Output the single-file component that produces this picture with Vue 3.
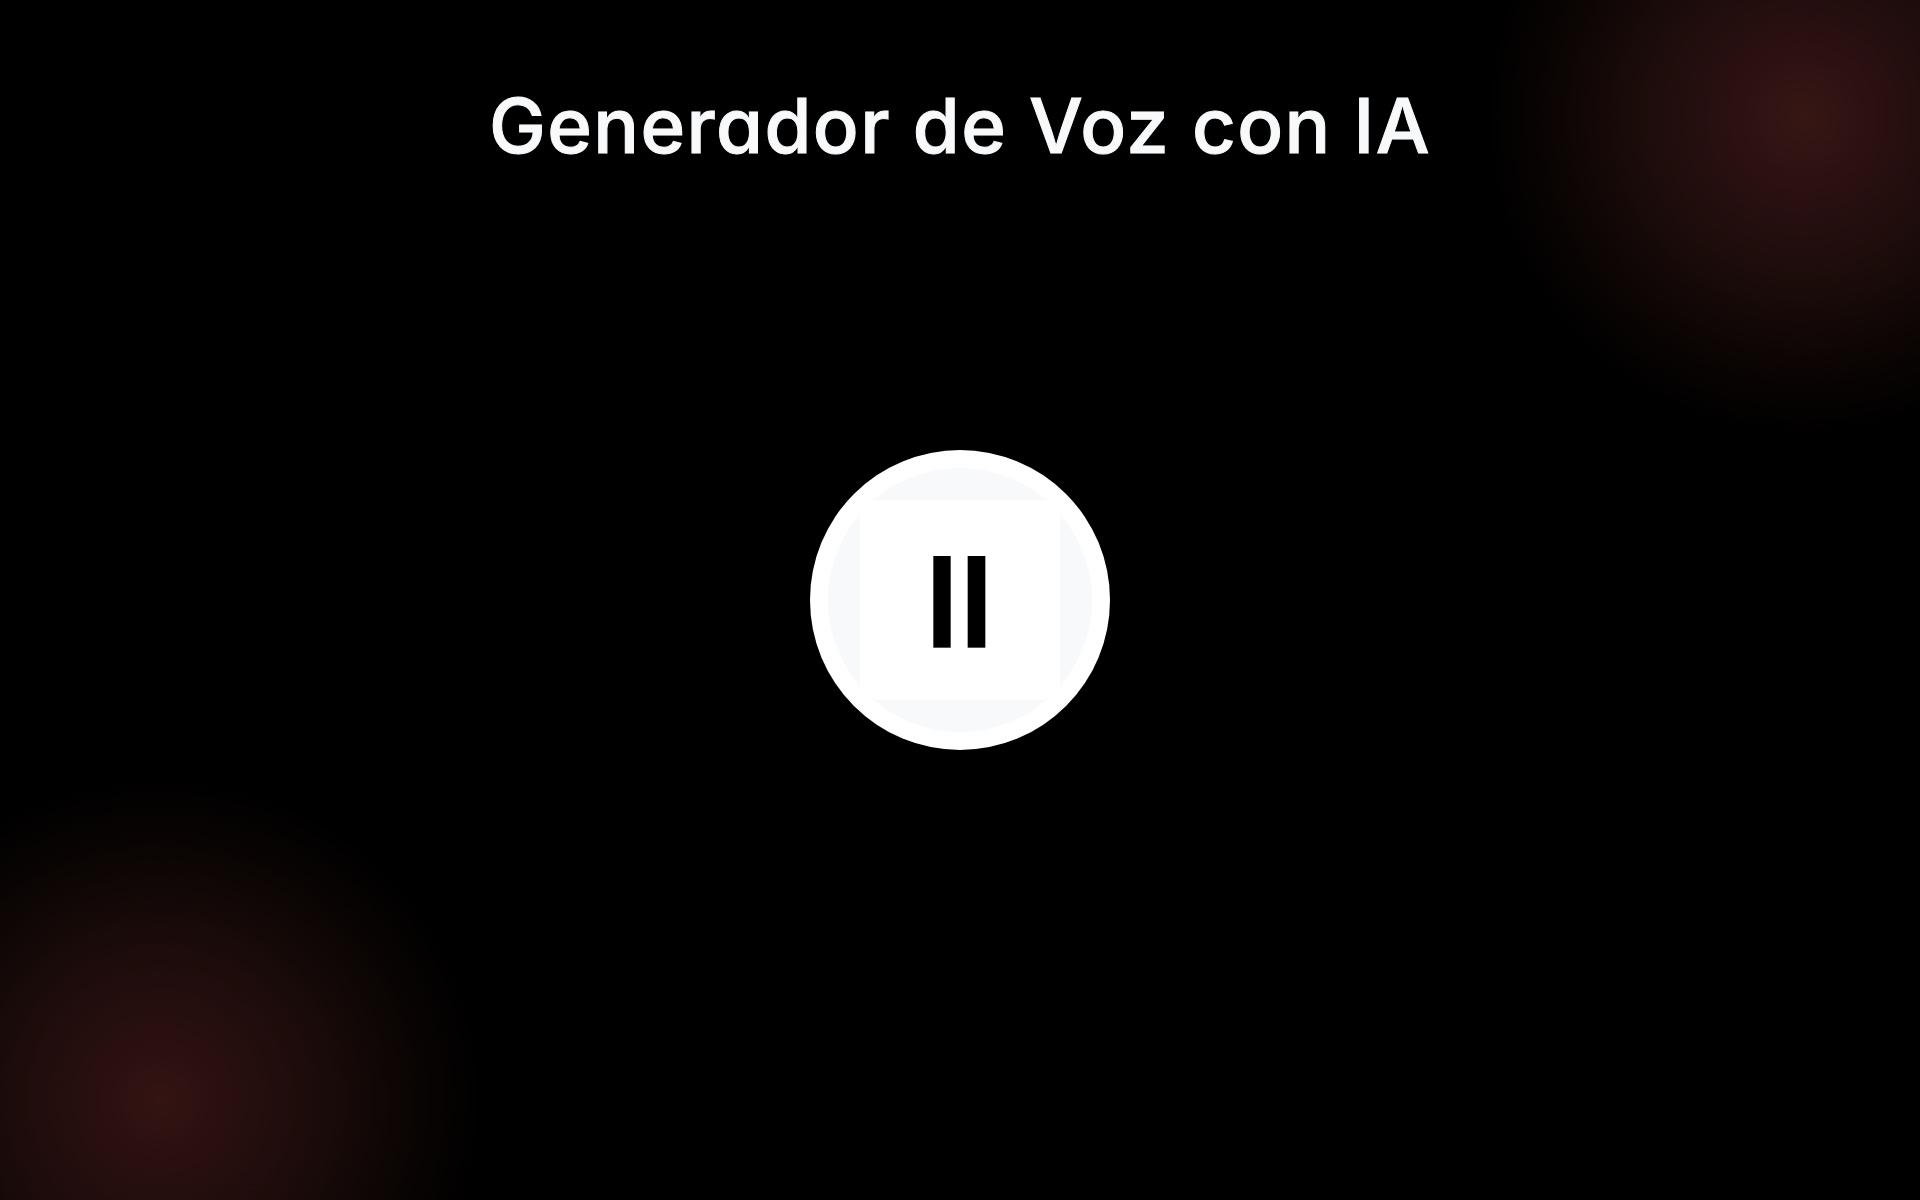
<script setup>
const title = 'Generador de Voz con IA'
</script>

<template>
  <main class="page">
    <h1 class="title">{{ title }}</h1>
    <button class="orb" type="button" aria-label="Pausar">
      <span class="disc">
        <span class="square">
          <svg class="pause" viewBox="0 0 200 200" width="200" height="200" aria-hidden="true">
            <rect x="73.33" y="56" width="17.34" height="91.67" />
            <rect x="107.67" y="56" width="17.66" height="91.67" />
          </svg>
        </span>
      </span>
    </button>
  </main>
</template>

<style>
html, body { margin: 0; background: #000; }
</style>

<style scoped>
.page {
  height: 1200px;
  overflow: hidden;
  display: grid;
  grid-template-rows: 1fr 300px 1fr;
  justify-items: center;
  background:
    radial-gradient(circle 320px at 1803px 117px, #361714 0%, #2c1012 22%, #1b0c0a 52%, #0a0403 80%, #000 100%),
    radial-gradient(circle 325px at 160px 1100px, #331412 0%, #2a0f10 20%, #190b09 52%, #090403 80%, #000 100%),
    #000;
  background-blend-mode: screen, screen, normal;
}
.title {
  margin: 0;
  padding-top: 80px;
  color: #f8f9fa;
  font-family: Inter, "Liberation Sans", sans-serif;
  font-feature-settings: "cv11" 1;
  font-size: 76px;
  line-height: 90px;
  font-weight: 500;
  letter-spacing: 1.45px;
  -webkit-text-stroke: 1px #f8f9fa;
  white-space: nowrap;
}
.orb {
  grid-row: 2;
  width: 300px;
  height: 300px;
  padding: 18px;
  border: 0;
  border-radius: 50%;
  background: #fff;
  box-sizing: border-box;
}
.disc {
  width: 100%;
  height: 100%;
  border-radius: 50%;
  background: #f8f9fa;
  display: flex;
  align-items: center;
  justify-content: center;
  overflow: hidden;
}
.square {
  width: 200px;
  height: 200px;
  flex: none;
  background: #fff;
  display: block;
}
.pause { display: block; fill: #000; }
</style>
